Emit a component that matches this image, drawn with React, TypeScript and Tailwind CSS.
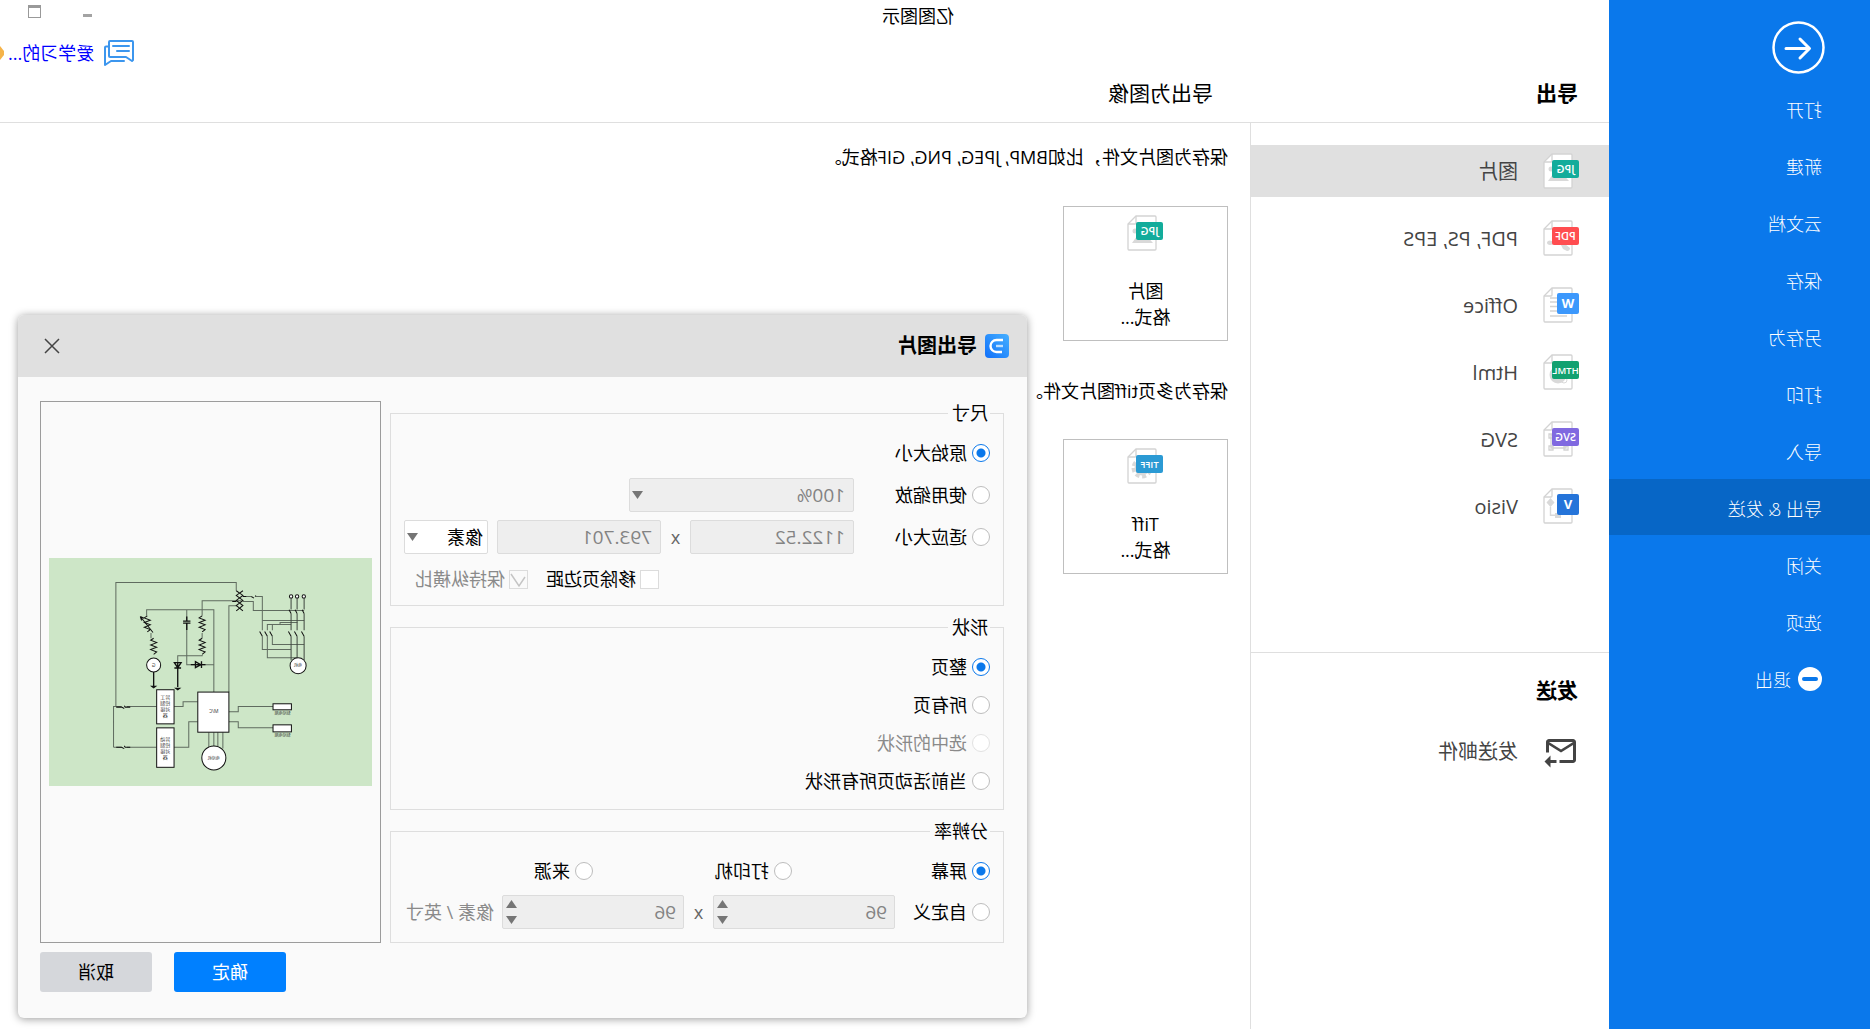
import React, { useState } from 'react';
import { MdForwardToInbox } from 'react-icons/md';
import { clsx } from 'clsx';

type FileKind = 'jpg' | 'pdf' | 'word' | 'html' | 'svg' | 'visio' | 'tiff';

const MENU = ['打开', '新建', '云文档', '保存', '另存为', '打印', '导入', '导出 & 发送', '关闭', '选项'];

const FORMATS: { kind: FileKind; label: string }[] = [
  { kind: 'jpg', label: '图片' },
  { kind: 'pdf', label: 'PDF, PS, EPS' },
  { kind: 'word', label: 'Office' },
  { kind: 'html', label: 'Html' },
  { kind: 'svg', label: 'SVG' },
  { kind: 'visio', label: 'Visio' },
];

const BADGES: Record<FileKind, { text: string; color: string; square?: boolean }> = {
  jpg: { text: 'JPG', color: '#12ac9b' },
  pdf: { text: 'PDF', color: '#ff4d50' },
  word: { text: 'W', color: '#3c98fc', square: true },
  html: { text: 'HTML', color: '#12a170' },
  svg: { text: 'SVG', color: '#8069e0' },
  visio: { text: 'V', color: '#2574d9', square: true },
  tiff: { text: 'TIFF', color: '#2b9ad4' },
};

function FileIcon({ kind }: { kind: FileKind }) {
  const badge = BADGES[kind];
  return (
    <svg className="h-9 w-9 shrink-0" viewBox="0 0 36 36" aria-hidden="true">
      <path d="M8 1h19l8 8v25a1 1 0 0 1-1 1H8a1 1 0 0 1-1-1V2a1 1 0 0 1 1-1z" fill="#fff" stroke="#d3d3d3" strokeWidth="1.3" />
      <path d="M27 1v7a1 1 0 0 0 1 1h7" fill="none" stroke="#d3d3d3" strokeWidth="1.3" />
      <g fill="#d9d9d9">
        {kind === 'jpg' && (
          <>
            <circle cx="28" cy="16" r="2.5" />
            <path d="M10 28l7-8 5 4 4-3 5 7z" />
          </>
        )}
        {kind === 'pdf' && <path d="M9 28l5-4 5-1-3 6-4 2c-2 0-3-1-3-3zM24 22l5-1.500c4 0 4 4.500 0 4.500l-5-1z" />}
        {kind === 'word' && (
          <path d="M13 11h16M13 15h16M13 19.500h16M13 24h16M12 29h17" stroke="#d3d3d3" strokeWidth="1.3" />
        )}
        {kind === 'html' && (
          <>
            <circle cx="21" cy="21" r="8.500" />
            <circle cx="15" cy="26" r="3" fill="none" stroke="#d9d9d9" />
          </>
        )}
        {kind === 'svg' && (
          <path d="M13 14h15v13H13zM11 25h4v4h-4zM26 25h4v4h-4zM26 13h4v4h-4z" fill="#fff" stroke="#d3d3d3" strokeWidth="1.3" />
        )}
        {kind === 'visio' && <path d="M28.500 10l4 4.500-4 4.500-4-4.500zM27.800 19h1.400v9H24v2h-6v-5h6v1.500h3.800z" />}
        {kind === 'tiff' && (
          <>
            <circle cx="21" cy="20" r="8.500" fill="none" stroke="#d9d9d9" strokeWidth="4" strokeDasharray="4 2.700" />
            <circle cx="21" cy="20" r="5.500" fill="none" stroke="#d9d9d9" strokeWidth="4" />
          </>
        )}
      </g>
      {badge.square ? (
        <>
          <rect x="0" y="6" width="22" height="21" rx="2" fill={badge.color} />
          <text x="11" y="21" fontSize="13" fontWeight="700" fill="#fff" textAnchor="middle">{badge.text}</text>
        </>
      ) : (
        <>
          <rect x="0" y="7" width="27" height="18" rx="2" fill={badge.color} />
          <text x="13.500" y="20" fontSize={badge.text.length > 3 ? 9.5 : 11} fontWeight="600" fill="#fff" textAnchor="middle">
            {badge.text}
          </text>
        </>
      )}
    </svg>
  );
}

function ChatIcon() {
  return (
    <svg className="h-[27px] w-[30px]" viewBox="0 0 30 27" fill="none" stroke="#3c96ee" strokeWidth="2" strokeLinejoin="round" strokeLinecap="round" aria-hidden="true">
      <path d="M1 2a1 1 0 0 1 1-1h22a1 1 0 0 1 1 1v14a1 1 0 0 1-1 1H8l-6 4 -1-1z" />
      <path d="M25 6.500h3a1 1 0 0 1 1 1V25l-6-4H10" />
      <path d="M5 6h16M5 11h12" />
    </svg>
  );
}

function Triangle({ up }: { up?: boolean }) {
  return (
    <svg className="pointer-events-none h-2 w-[11px]" viewBox="0 0 11 8" fill="#757575" aria-hidden="true">
      <path d={up ? 'M0 8h11L5.500 0z' : 'M0 0h11L5.500 8z'} />
    </svg>
  );
}

interface ChoiceProps {
  label: string;
  name?: string;
  defaultChecked?: boolean;
  disabled?: boolean;
  className?: string;
}

function Radio({ label, name, defaultChecked, disabled, className }: ChoiceProps) {
  return (
    <label className={clsx('flex shrink-0 items-center gap-[5px]', disabled && 'text-[#8a8a8a]', className)}>
      <input
        type="radio"
        name={name}
        defaultChecked={defaultChecked}
        disabled={disabled}
        className="h-[18px] w-[18px] shrink-0 appearance-none rounded-full border border-[#bdbdbd] bg-white checked:border-[#0a78eb] checked:bg-[radial-gradient(circle,#0a78eb_4px,white_5px)] disabled:border-[#e2e2e2]"
      />
      {label}
    </label>
  );
}

function Checkbox({ label, defaultChecked, disabled }: ChoiceProps) {
  return (
    <label className={clsx('flex items-center gap-1', disabled && 'text-[#8a8a8a]')}>
      <span className="grid">
        <input
          type="checkbox"
          defaultChecked={defaultChecked}
          disabled={disabled}
          className="col-start-1 row-start-1 h-[19px] w-[19px] appearance-none border border-[#dcdcdc] bg-white disabled:bg-[#fafafa]"
        />
        {defaultChecked && (
          <svg className="pointer-events-none col-start-1 row-start-1 h-[19px] w-[19px]" viewBox="0 0 19 19" fill="none" stroke="#c4c4c4" strokeWidth="1.500" aria-hidden="true">
            <path d="M3 7l6 9 8-12" />
          </svg>
        )}
      </span>
      {label}
    </label>
  );
}

const FIELD = 'h-[34px] rounded-xs border border-[#dcdcdc] bg-[#eeeeee] text-[19px] text-[#838383]';

function Dropdown({ label, value, disabled, className }: { label: string; value: string; disabled?: boolean; className?: string }) {
  return (
    <div className={clsx('grid items-center', className)}>
      <select
        aria-label={label}
        disabled={disabled}
        className={clsx(
          'col-start-1 row-start-1 h-[34px] w-full appearance-none rounded-xs border border-[#dcdcdc] leading-8 opacity-100',
          disabled ? 'bg-[#eeeeee] pl-2 text-[19px] text-[#838383]' : 'bg-white pl-1',
        )}
      >
        <option>{value}</option>
      </select>
      <span className="pointer-events-none col-start-1 row-start-1 flex justify-self-end pr-[3px]">
        <Triangle />
      </span>
    </div>
  );
}

function Spinner({ label }: { label: string }) {
  return (
    <div className={clsx('flex w-[182px] items-center pr-[3px]', FIELD)}>
      <input aria-label={label} defaultValue="96" disabled className="min-w-0 flex-1 bg-transparent pl-[7px]" />
      <div className="flex flex-col gap-2">
        <button type="button" disabled aria-label="增加"><Triangle up /></button>
        <button type="button" disabled aria-label="减少"><Triangle /></button>
      </div>
    </div>
  );
}

function Group({ title, className, children }: { title: string; className?: string; children: React.ReactNode }) {
  return (
    <fieldset className="border border-[#dedede] px-[13px]">
      <legend className="h-6 pr-1 pl-0.5 leading-6">{title}</legend>
      <div className={clsx('flex flex-col', className)}>{children}</div>
    </fieldset>
  );
}

function Circuit() {
  const zig = (x: number, y: number) =>
    `M${x} ${y}l9 6-18 7 18 7-18 7 18 7-18 7 9 7`;
  return (
    <svg className="w-full" viewBox="0 0 966 684" fill="none" stroke="#5f6b5f" strokeWidth="3" role="img" aria-label="预览">
      <rect width="966" height="684" fill="#cde6c7" stroke="none" />
      <path d="M406 98V73H766V444M508 173V128H390M428 401V143H404M386 115H361M346 115H328V216M386 130H355V157H203" />
      <path d="M203 187H328M275 198V193H223M313 216V199H242M298 216V199M298 234V259H203M328 234V274H242M313 234V298H223" />
      <path d="M674 173V155H473V401M554 155V189M554 195V319H473M508 224V240M508 290V292H581V312M661 224V240" />
      <path d="M773 566V444H749M733 444H644M773 566H749M733 566H644M592 444H565V430H521M592 566H548V490H521" />
      <path d="M428 460H400V444H296M428 490H400V508H296M488 521V570M473 521V570M461 521V570M446 521V570" />
      <g stroke="#3f463f">
        <path d="M242 120V154M242 166V216M242 234V306M224 120V154M224 166V216M224 234V298M203 120V154M203 166V216M203 234V306" />
      </g>
      <g stroke="#111">
        <path d="M406 98L386 112L406 127L386 142L406 158M386 98L406 112L386 127L406 142L386 158M376 115h10M406 130h12" />
        <path d={zig(672, 173)} />
        <path d={zig(653, 240)} />
        <path d={zig(508, 173)} />
        <path d={zig(508, 240)} />
        <path d="M693 175l-38 48M693 175l-4 12M693 175l-11 5" />
        <path d="M543 189h22M543 195h22M554 175v12M554 197v18M581 312V386M571 313h20l-10 15zM571 329h20M528 310v18l-16-9zM510 309v20M498 319h44M653 341V383" strokeWidth="4" />
        <path d="M242 166l6-11M224 166l6-11M203 166l6-11M242 234l8-14M224 234l8-14M203 234l8-14M298 234l8-14M313 234l8-14M328 234l8-14" />
        <path d="M765 446h-16l-8 4M741 442l-3 4h-15M765 566h-16l-8 4M741 562l-3 4h-15M361 115l-8 5M350 113l-4 2" />
      </g>
      <path d="M642 382h22l-11 8zM570 388h22l-11 8z" fill="#111" stroke="none" />
      <g fill="#fff" stroke="#111">
        <circle cx="242" cy="115" r="5" />
        <circle cx="224" cy="115" r="5" />
        <circle cx="204" cy="115" r="5" />
        <circle cx="221" cy="322" r="24" />
        <circle cx="653" cy="320" r="21" />
        <circle cx="473" cy="598" r="36" />
        <rect x="592" y="394" width="52" height="102" />
        <rect x="592" y="508" width="52" height="118" />
        <rect x="428" y="401" width="93" height="120" />
        <rect x="241" y="436" width="55" height="18" />
        <rect x="241" y="499" width="55" height="21" />
      </g>
      <g fill="#333" stroke="none" fontSize="15" textAnchor="middle">
        <text x="473" y="464">M/C</text>
        <text x="473" y="603" fontSize="12">电动机</text>
        <text x="221" y="327" fontSize="12">电机</text>
        <text x="653" y="325">G</text>
        <text x="268" y="471" fontSize="12">制动电阻</text>
        <text x="268" y="534" fontSize="12">制动电阻</text>
        {['异工', '控制', '对接', '器'].map((t, i) => (
          <text key={t} x="618" y={423 + i * 18}>{t}</text>
        ))}
        {['异动', '控制', '对接', '器'].map((t, i) => (
          <text key={t} x="618" y={546 + i * 18}>{t}</text>
        ))}
      </g>
    </svg>
  );
}

function ExportDialog() {
  return (
    <div role="dialog" aria-label="导出图片" className="absolute top-[315px] right-[18px] w-[1009px] rounded-md bg-[#fafafa] shadow-[0_1px_8px_rgba(0,0,0,0.4)]">
      <div className="flex h-[62px] items-center rounded-t-md bg-[#e0e0e0] pr-[26px] pl-[18px]">
        <svg className="h-6 w-6" viewBox="0 0 24 24" aria-hidden="true">
          <defs>
            <linearGradient id="logo" x1="0" y1="0" x2="1" y2="1">
              <stop offset="0" stopColor="#46b0ff" />
              <stop offset="1" stopColor="#1070fa" />
            </linearGradient>
          </defs>
          <rect width="24" height="24" rx="4" fill="url(#logo)" />
          <path d="M6 6h6.500a6 6 0 0 1 0 12H7" fill="none" stroke="#fff" strokeWidth="2.400" />
          <path d="M6 12h7" stroke="#bfe0ff" strokeWidth="2.400" />
        </svg>
        <h2 className="flex-1 pl-2 text-xl font-bold">导出图片</h2>
        <button type="button" aria-label="关闭">
          <svg className="h-4 w-4" viewBox="0 0 16 16" stroke="#444" strokeWidth="1.500" aria-hidden="true">
            <path d="M1 1l14 14M15 1L1 15" />
          </svg>
        </button>
      </div>

      <form className="pt-6 pr-[22px] pb-[26px] pl-[23px]">
        <div className="flex gap-[9px]">
          <div className="flex flex-1 flex-col gap-[9px]">
            <Group title="尺寸" className="gap-2 pt-[11px] pb-[9px]">
              <div className="flex h-[34px] items-center">
                <Radio name="size" label="原始大小" defaultChecked />
              </div>
              <div className="flex items-center">
                <Radio name="size" label="使用缩放" className="w-[136px]" />
                <Dropdown label="缩放比例" value="100%" disabled className="w-[225px]" />
              </div>
              <div className="flex items-center">
                <Radio name="size" label="适应大小" className="w-[136px]" />
                <input aria-label="宽度" defaultValue="1122.52" disabled className={clsx('w-[164px] px-2', FIELD)} />
                <span className="w-[29px] text-center text-[#666]">x</span>
                <input aria-label="高度" defaultValue="793.701" disabled className={clsx('w-[164px] px-2', FIELD)} />
                <Dropdown label="单位" value="像素" className="ml-[9px] flex-1" />
              </div>
              <div className="flex h-[34px] items-center gap-[18px] pl-[331px]">
                <Checkbox label="移除页边距" />
                <Checkbox label="保持纵横比" defaultChecked disabled />
              </div>
            </Group>

            <Group title="形状" className="py-[9px]">
              <Radio name="shape" label="整页" defaultChecked className="h-[38px]" />
              <Radio name="shape" label="所有页" className="h-[38px]" />
              <Radio name="shape" label="选中的形状" disabled className="h-[38px]" />
              <Radio name="shape" label="当前活动页所有形状" className="h-[38px]" />
            </Group>

            <Group title="分辨率" className="gap-[7px] pt-[11px] pb-[13px]">
              <div className="flex h-[34px] items-center">
                <Radio name="dpi" label="屏幕" defaultChecked className="w-[198px]" />
                <Radio name="dpi" label="打印机" className="w-[199px]" />
                <Radio name="dpi" label="来源" />
              </div>
              <div className="flex items-center">
                <Radio name="dpi" label="自定义" className="w-[95px]" />
                <Spinner label="水平分辨率" />
                <span className="w-[29px] text-center text-[#666]">x</span>
                <Spinner label="垂直分辨率" />
                <span className="pl-2 text-[#8a8a8a]">像素 / 英寸</span>
              </div>
            </Group>
          </div>

          <div className="flex w-[341px] items-center border border-[#9c9c9c] px-2">
            <Circuit />
          </div>
        </div>

        <div className="flex justify-end gap-[22px] pt-[9px]">
          <button type="button" className="h-10 w-28 rounded-[3px] bg-[#0080ff] text-white">确定</button>
          <button type="button" className="h-10 w-28 rounded-[3px] bg-[#d5d7db]">取消</button>
        </div>
      </form>
    </div>
  );
}

function FormatCard({ kind, name }: { kind: FileKind; name: string }) {
  return (
    <button type="button" className="flex h-[135px] w-[165px] flex-col items-center border border-[#bfbfbf] pt-2 leading-[26px]">
      <FileIcon kind={kind} />
      <span className="pt-[27px]">{name}</span>
      <span>格式...</span>
    </button>
  );
}

export default function App() {
  const [menu, setMenu] = useState('导出 & 发送');
  const [format, setFormat] = useState<FileKind>('jpg');

  return (
    <div className="relative flex min-h-screen -scale-x-100 overflow-hidden bg-white font-['Open_Sans','Noto_Sans_CJK_SC',sans-serif] text-lg leading-[26px] text-black [font-variant-ligatures:none]">
      <nav className="flex w-[261px] shrink-0 flex-col bg-[#0a78eb] font-light text-white">
        <button type="button" aria-label="返回" className="mt-[21px] mb-1.5 ml-[45px] h-[53px] w-[53px]">
          <svg viewBox="0 0 53 53" fill="none" stroke="#fff" strokeWidth="2.500" aria-hidden="true">
            <circle cx="26.500" cy="26.500" r="25" />
            <path d="M39 27.500H16M25 18l-9.500 9.500L25 37" strokeWidth="3" strokeLinecap="round" strokeLinejoin="round" />
          </svg>
        </button>
        {MENU.map((item) => (
          <button
            key={item}
            type="button"
            onClick={() => setMenu(item)}
            className={clsx('mb-px h-14 pt-1 pl-12 text-left', menu === item && 'bg-[#0766c6]')}
          >
            {item}
          </button>
        ))}
        <button type="button" className="flex h-14 items-center gap-[7px] pt-0.5 pl-12">
          <svg className="h-6 w-6" viewBox="0 0 24 24" aria-hidden="true">
            <circle cx="12" cy="12" r="12" fill="#fff" />
            <path d="M6 12h12" stroke="#0a78eb" strokeWidth="4" strokeLinecap="round" />
          </svg>
          <span className="pt-0.5">退出</span>
        </button>
      </nav>

      <div className="flex min-w-0 flex-1 flex-col">
        <header className="border-b border-[#dfdfdf]">
          <div className="flex h-8 items-start">
            <h1 className="flex-1 pt-[3px] text-center">亿图图示</h1>
            <div className="flex w-[227px] justify-end gap-[42px] pt-[5px] pr-7">
              <button type="button" aria-label="最小化" className="h-[13px] w-[9px]">
                <span className="mt-2 block h-[3px] bg-[#a3a3a3]" />
              </button>
              <button type="button" aria-label="最大化" className="h-[13px] w-[13px] border border-t-[3px] border-[#999]" />
            </div>
          </div>
          <div className="flex h-[42px] items-center justify-end">
            <ChatIcon />
            <a href="#account" className="pr-1 pl-2.5 text-[#0000ff]">爱学习的...</a>
            <svg className="h-3.5 w-1" viewBox="0 0 4 14" aria-hidden="true">
              <path d="M4 0L0 5v4l4 5z" fill="#f5b34a" />
            </svg>
          </div>
          <div className="flex h-12 items-center pb-2.5 pl-[31px] text-[21px]">
            <h2 className="w-[365px] font-bold">导出</h2>
            <h2>导出为图像</h2>
          </div>
        </header>

        <div className="flex flex-1">
          <aside className="w-[359px] shrink-0 border-r border-[#dfdfdf] text-xl text-[#444]">
            <ul className="flex flex-col gap-[15px] border-b border-[#dfdfdf] pt-[22px] pb-[120px]">
              {FORMATS.map(({ kind, label }) => (
                <li key={kind}>
                  <button
                    type="button"
                    onClick={() => setFormat(kind)}
                    className={clsx('flex h-[52px] w-full items-center gap-[25px] pl-[30px]', format === kind && 'bg-[#e0e0e0]')}
                  >
                    <FileIcon kind={kind} />
                    <span className="pt-0.5">{label}</span>
                  </button>
                </li>
              ))}
            </ul>
            <h2 className="pt-[23px] pl-[31px] text-[21px] font-bold text-black">发送</h2>
            <button type="button" className="mt-[21px] flex h-[52px] w-full items-center gap-[25px] pl-[30px]">
              <MdForwardToInbox className="mb-0.5 h-9 w-9" />
              发送邮件
            </button>
          </aside>

          <main className="pt-[21px] pl-[22px]">
            <p className="mb-9">保存为图片文件，比如BMP, JPEG, PNG, GIF格式。</p>
            <FormatCard kind="jpg" name="图片" />
            <p className="mt-[37px] mb-[35px]">保存为多页tiff图片文件。</p>
            <FormatCard kind="tiff" name="Tiff" />
          </main>
        </div>
      </div>

      <ExportDialog />
    </div>
  );
}
